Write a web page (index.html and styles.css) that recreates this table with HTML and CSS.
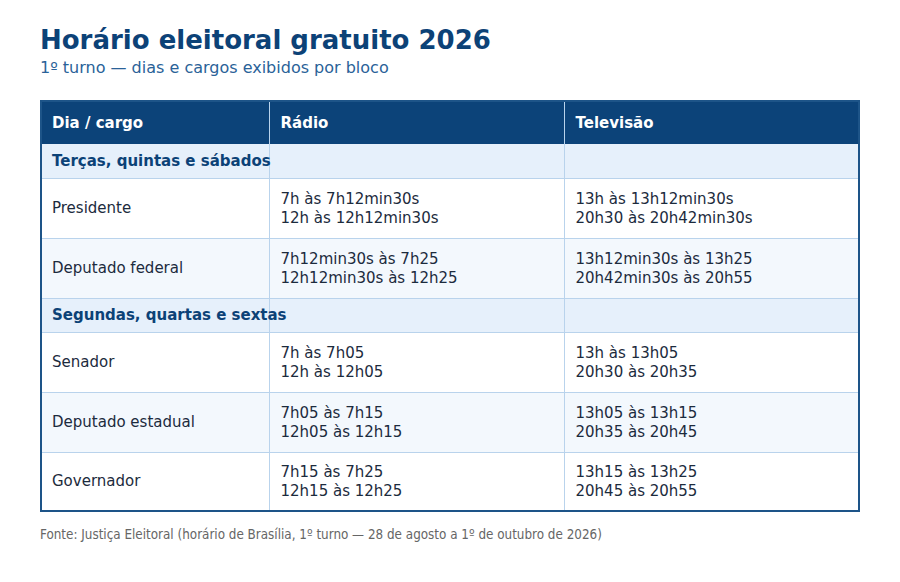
FILE: index.html
```html
<!DOCTYPE html>
<html lang="pt-BR">
<head>
<meta charset="utf-8">
<title>Horário eleitoral gratuito 2026</title>
<link rel="stylesheet" href="styles.css">
</head>
<body>
<main class="page">
  <header class="heading">
    <h1 class="title">Horário eleitoral gratuito 2026</h1>
    <p class="subtitle">1º turno — dias e cargos exibidos por bloco</p>
  </header>
  <div class="table-wrap">
    <table class="schedule">
      <colgroup>
        <col class="col-cargo">
        <col class="col-radio">
        <col class="col-tv">
      </colgroup>
      <thead>
        <tr>
          <th>Dia / cargo</th>
          <th>Rádio</th>
          <th>Televisão</th>
        </tr>
      </thead>
      <tbody>
        <tr class="group">
          <td>Terças, quintas e sábados</td><td></td><td></td>
        </tr>
        <tr class="row">
          <td>Presidente</td>
          <td>7h às 7h12min30s<br>12h às 12h12min30s</td>
          <td>13h às 13h12min30s<br>20h30 às 20h42min30s</td>
        </tr>
        <tr class="row alt">
          <td>Deputado federal</td>
          <td>7h12min30s às 7h25<br>12h12min30s às 12h25</td>
          <td>13h12min30s às 13h25<br>20h42min30s às 20h55</td>
        </tr>
        <tr class="group">
          <td>Segundas, quartas e sextas</td><td></td><td></td>
        </tr>
        <tr class="row">
          <td>Senador</td>
          <td>7h às 7h05<br>12h às 12h05</td>
          <td>13h às 13h05<br>20h30 às 20h35</td>
        </tr>
        <tr class="row alt">
          <td>Deputado estadual</td>
          <td>7h05 às 7h15<br>12h05 às 12h15</td>
          <td>13h05 às 13h15<br>20h35 às 20h45</td>
        </tr>
        <tr class="row">
          <td>Governador</td>
          <td>7h15 às 7h25<br>12h15 às 12h25</td>
          <td>13h15 às 13h25<br>20h45 às 20h55</td>
        </tr>
      </tbody>
    </table>
  </div>
  <p class="source">Fonte: Justiça Eleitoral (horário de Brasília, 1º turno — 28 de agosto a 1º de outubro de 2026)</p>
</main>
</body>
</html>
```
FILE: styles.css
```css
html, body {
  margin: 0;
  padding: 0;
  background: #ffffff;
}

body {
  font-family: "DejaVu Sans", "Liberation Sans", sans-serif;
  color: #1c2b3d;
}

.page {
  padding: 24px 40px 0 40px;
}

.heading {
  display: flex;
  flex-direction: column;
  gap: 2px;
}

.title {
  margin: 0;
  font-size: 26px;
  line-height: 32px;
  font-weight: bold;
  color: #0c4277;
}

.subtitle {
  margin: 0;
  font-size: 16px;
  line-height: 20px;
  color: #2a6298;
}

.table-wrap {
  margin-top: 22px;
  border: 2px solid #1d5488;
}

.schedule {
  width: 100%;
  border-collapse: collapse;
  table-layout: fixed;
  font-size: 15px;
}

.col-cargo {
  width: 227px;
}

.col-radio {
  width: 295px;
}

.schedule th {
  background: #0c4379;
  color: #ffffff;
  font-weight: bold;
  text-align: left;
  height: 42px;
  padding: 0 11px;
  border-left: 1px solid #b9d3ec;
}

.schedule td {
  padding: 0 11px;
  border-left: 1px solid #b9d3ec;
  border-top: 1px solid #b9d3ec;
  line-height: 19px;
  vertical-align: middle;
}

.schedule th:first-child,
.schedule td:first-child {
  border-left: none;
  padding-left: 10px;
}

.group td {
  height: 33px;
  background: #e6f0fb;
  color: #0c4277;
  font-weight: bold;
  white-space: nowrap;
  overflow: visible;
}

.schedule thead + tbody .group:first-child td {
  border-top: none;
  height: 34px;
}

.row td {
  height: 59px;
  background: #ffffff;
}

.row:last-child td {
  height: 57px;
}

.row.alt td {
  background: #f3f8fd;
}

.source {
  margin: 15px 0 0 0;
  font-family: "DejaVu Sans Condensed", "DejaVu Sans", sans-serif;
  font-size: 13.33px;
  color: #666666;
}
```
